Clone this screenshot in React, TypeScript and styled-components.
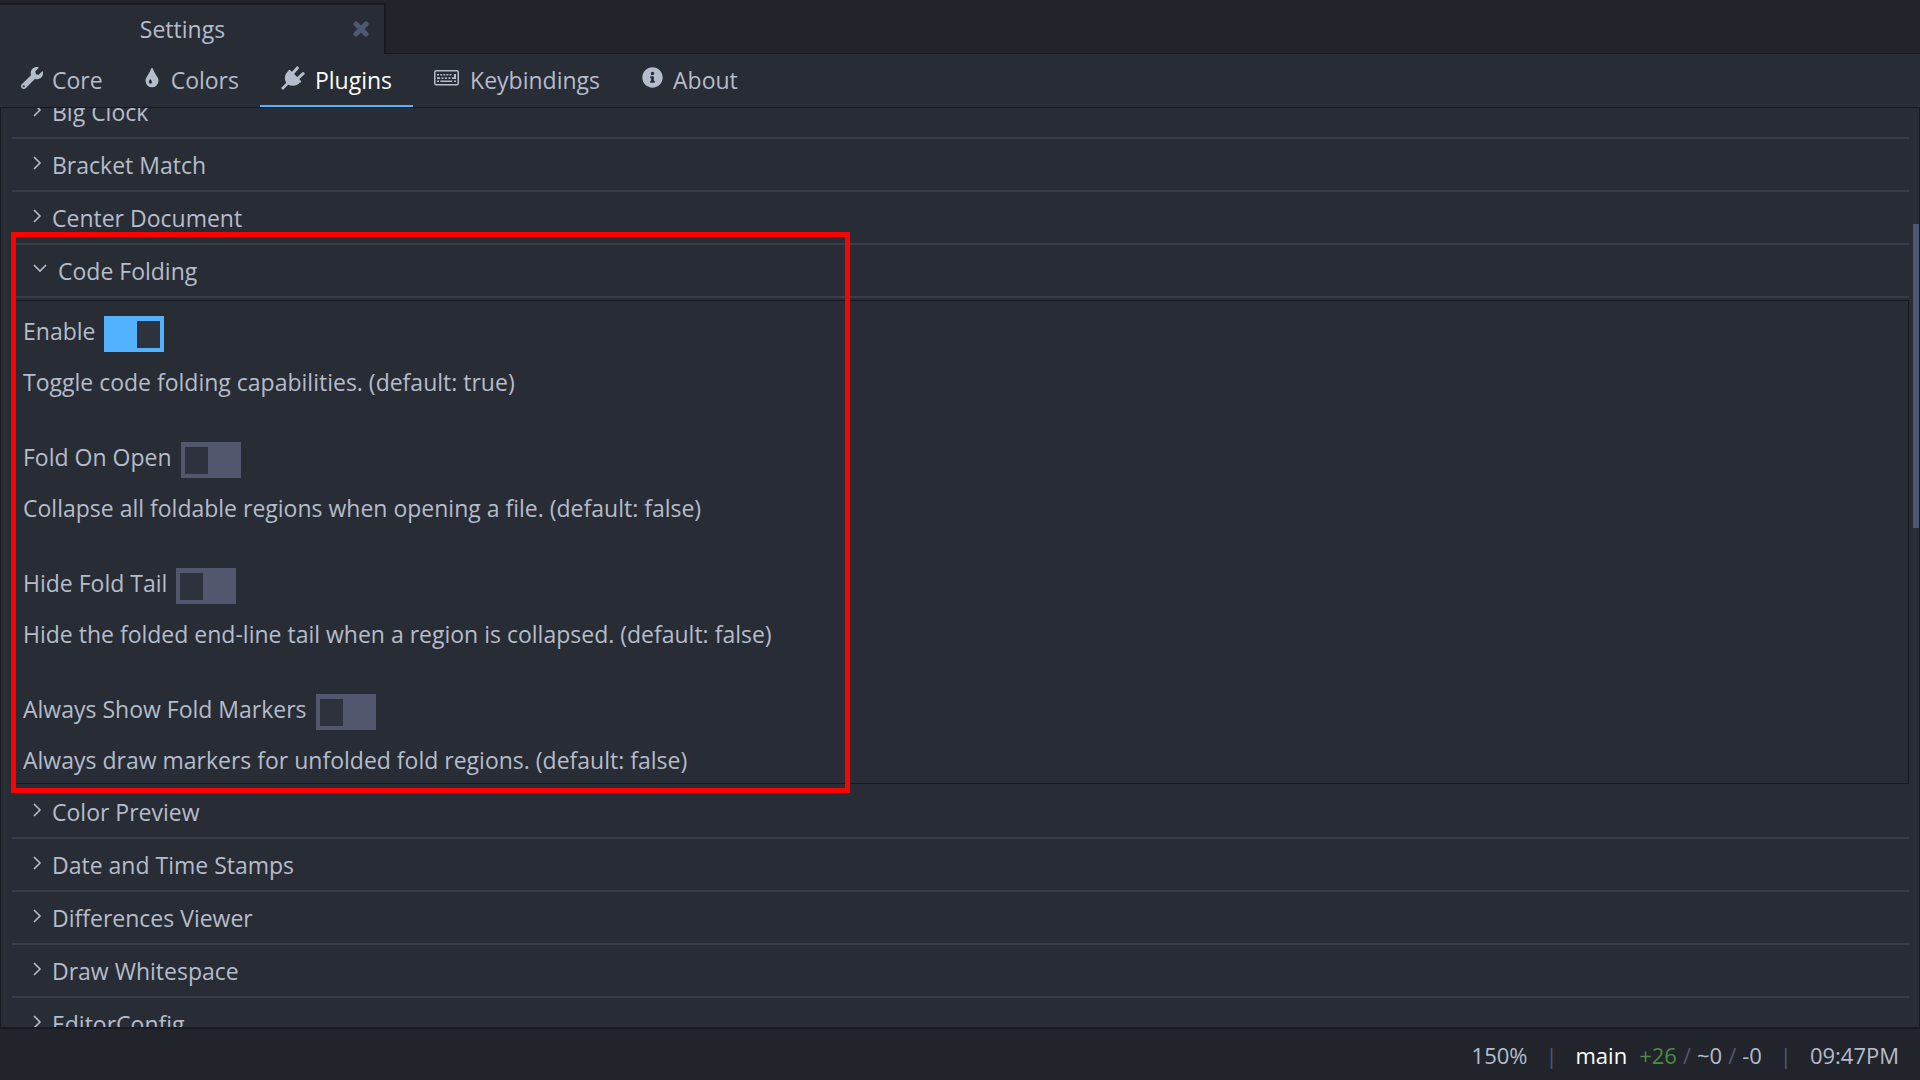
import React, { useLayoutEffect, useRef, useState } from "react";
import styled, { createGlobalStyle } from "styled-components";
import { FaInfoCircle, FaWrench } from "react-icons/fa";

const color = {
  base: "#282c34",
  shade: "#21252b",
  line: "#181a1f",
  divider: "#393d49",
  text: "#b5bccb",
  bright: "#ffffff",
  dim: "#4f5873",
  accent: "#52b2ff",
  off: "#53576e",
  knob: "#2d323c",
  added: "#4b8b43",
  mark: "#ff0000",
};

const GlobalStyle = createGlobalStyle`
  * { box-sizing: border-box; }
  html, body, #root { height: 100%; }
  body {
    margin: 0;
    background: ${color.base};
    color: ${color.text};
    font: 23px/30px "Open Sans", "Noto Sans", sans-serif;
  }
  button { font: inherit; color: inherit; background: none; border: 0; padding: 0; cursor: pointer; }
  svg { display: block; flex: none; }
`;

const Window = styled.div`
  height: 100vh;
  display: flex;
  flex-direction: column;
  overflow: hidden;
`;

const TabStrip = styled.header`
  display: flex;
  flex: none;
  height: 54px;
  padding-top: 3px;
  background: ${color.shade};
`;

const DocumentTab = styled.div`
  display: flex;
  align-items: center;
  width: 386px;
  padding: 0 15px 2px 0;
  background: ${color.base};
  border-top: 2px solid ${color.line};
  border-right: 2px solid ${color.line};
`;

const DocumentTitle = styled.span`
  flex: 1;
  padding-left: 12px;
  text-align: center;
`;

const CloseButton = styled.button`
  color: ${color.dim};
`;

const StripRest = styled.div`
  flex: 1;
  border-bottom: 1px solid ${color.line};
`;

const Sections = styled.nav`
  display: flex;
  flex: none;
  height: 54px;
  border-bottom: 1px solid ${color.line};
`;

const SectionTab = styled.button<{ $active: boolean }>`
  display: flex;
  align-items: center;
  padding: 0 21px;
  color: ${(p) => (p.$active ? color.bright : color.text)};
  border-bottom: 2px solid ${(p) => (p.$active ? color.accent : "transparent")};
`;

const IconSlot = styled.span<{ $width: number }>`
  width: ${(p) => p.$width}px;
  padding-bottom: 4px;
  color: ${color.text};
`;

const Body = styled.main`
  display: flex;
  flex: 1;
  min-height: 0;
  border: 1px solid ${color.line};
  border-width: 0 1px;
`;

const List = styled.div`
  flex: 1;
  min-width: 0;
  padding-left: 11px;
  overflow-y: auto;
  scrollbar-width: none;
`;

const Track = styled.div`
  display: flex;
  flex-direction: column;
  width: 10px;
  padding-left: 4px;
`;

const TrackPart = styled.div<{ $grow: number; $thumb?: boolean }>`
  flex: ${(p) => p.$grow} 0 0;
  background: ${(p) => (p.$thumb ? color.dim : "transparent")};
`;

const Plugin = styled.section`
  position: relative;
`;

const PluginHeader = styled.button<{ $open: boolean }>`
  display: flex;
  align-items: center;
  gap: ${(p) => (p.$open ? 11 : 10)}px;
  width: 100%;
  height: 53px;
  padding: 0 0 0 21px;
  text-align: left;
  border-bottom: 2px solid ${color.divider};
`;

const Chevron = styled.span`
  padding-bottom: 4px;
`;

const Panel = styled.div`
  display: flex;
  flex-direction: column;
  gap: 42px;
  margin: 2px 0;
  padding: 15px 10px 5px;
  border: 1px solid ${color.line};
`;

const Option = styled.div`
  display: flex;
  flex-direction: column;
  gap: 12px;
`;

const OptionLabel = styled.label`
  display: flex;
  gap: 9px;
  height: 36px;
`;

const Toggle = styled.input`
  appearance: none;
  display: flex;
  width: 60px;
  height: 36px;
  margin: 0;
  padding: 5px 4px;
  background: ${color.off};
  &::before {
    content: "";
    width: 23px;
    height: 27px;
    background: ${color.knob};
  }
  &:checked {
    justify-content: flex-end;
    background: ${color.accent};
  }
`;

const Description = styled.p`
  margin: 0;
  line-height: 36px;
`;

const Highlight = styled.div`
  position: absolute;
  top: -13px;
  bottom: -9px;
  left: -1px;
  width: 839px;
  border: 5px solid ${color.mark};
  pointer-events: none;
`;

const StatusBar = styled.footer`
  display: flex;
  flex: none;
  align-items: center;
  justify-content: flex-end;
  height: 53px;
  padding: 0 21px;
  font-size: 22px;
  background: ${color.shade};
  border-top: 2px solid ${color.line};
`;

const Changes = styled.span`
  display: flex;
  gap: 6px;
  padding-left: 12px;
`;

const StatusText = styled.span<{ $color?: string }>`
  color: ${(p) => p.$color ?? color.text};
`;

const Separator = styled.span`
  width: 48px;
  text-align: center;
  color: ${color.dim};
`;

const CloseIcon = () => (
  <svg width="16" height="16" viewBox="0 0 16 16" fill="none" stroke="currentColor" strokeWidth="5" strokeLinecap="round">
    <path d="m3 3 10 10M13 3 3 13" />
  </svg>
);

const DropIcon = () => (
  <svg width="14" height="20" viewBox="0 0 14 20">
    <path
      fill="currentColor"
      fillRule="evenodd"
      d="M7 0c.5 0 .8.3 1 .8 1 3.400 2.300 5 4 7.700.9 1.400 1.500 2.600 1.500 4.300A6.500 6.500 0 0 1 .5 12.800C.5 11.100 1.100 9.900 2 8.500 3.700 5.800 5 4.200 6 .8 6.200.3 6.500 0 7 0ZM5.300 11c-.6 1.200-1.500 1.900-1.500 3.100a1.600 1.600 0 0 0 3.200 0c0-1.200-1-1.900-1.700-3.100Z"
    />
  </svg>
);

const PlugIcon = () => (
  <svg width="24" height="24" viewBox="0 0 24 24" fill="none" stroke="currentColor">
    <path fill="currentColor" stroke="none" d="M8.500 4.500 19.500 15.500C17 20 11 21 6.800 18.500L5.500 17.200C2.500 13 3.500 7 8.500 4.500Z" />
    <path strokeWidth="3" strokeLinecap="round" d="m11.500 7.500 4.800-5.600M16.800 12.500l5.300-4.900" />
    <path strokeWidth="2.600" d="M8 16 1 23" />
    <path strokeWidth="2.400" strokeLinecap="round" d="m8.500 5 10.500 10.500" />
  </svg>
);

const KeyboardIcon = () => (
  <svg width="25" height="16" viewBox="0 0 25 16" fill="currentColor">
    <rect x=".75" y=".75" width="23.500" height="14" rx="1.500" fill="none" stroke="currentColor" strokeWidth="1.500" />
    <path d="M3 4h2v1.600H3zM6.300 4h1.900v1.600H6.300zM9.400 4h1.900v1.600H9.400zM12.500 4h1.900v1.600h-1.900zM15.600 4h1.900v1.600h-1.900zM20 4h2v5h-4V7.300h2zM3 7.300h3.200V9H3zM7.600 7.300h1.900V9H7.600zM11 7.300h1.900V9H11zM14.500 7.300h1.900V9h-1.900zM3 10.500h2v1.600H3zM6.300 10.500h12v1.600h-12zM20 10.500h2v1.600h-2z" />
  </svg>
);

const sections = [
  { name: "Core", width: 31, icon: <FaWrench size={22} /> },
  { name: "Colors", width: 26, icon: <DropIcon /> },
  { name: "Plugins", width: 34, icon: <PlugIcon /> },
  { name: "Keybindings", width: 36, icon: <KeyboardIcon /> },
  { name: "About", width: 31, icon: <FaInfoCircle size={21} /> },
];

const foldingOptions = [
  { name: "Enable", text: "Toggle code folding capabilities. (default: true)", on: true },
  { name: "Fold On Open", text: "Collapse all foldable regions when opening a file. (default: false)", on: false },
  { name: "Hide Fold Tail", text: "Hide the folded end-line tail when a region is collapsed. (default: false)", on: false },
  { name: "Always Show Fold Markers", text: "Always draw markers for unfolded fold regions. (default: false)", on: false },
];

const plugins = [
  "Big Clock",
  "Bracket Match",
  "Center Document",
  "Code Folding",
  "Color Preview",
  "Date and Time Stamps",
  "Differences Viewer",
  "Draw Whitespace",
  "EditorConfig",
];

function PluginRow({ name }: { name: string }) {
  const hasOptions = name === "Code Folding";
  const [open, setOpen] = useState(hasOptions);
  return (
    <Plugin>
      <PluginHeader $open={open} aria-expanded={open} onClick={() => setOpen(!open)}>
        <Chevron>
          <svg
            width={open ? 14 : 9}
            height={open ? 9 : 14}
            viewBox={open ? "0 0 14 9" : "0 0 9 14"}
            fill="none"
            stroke="currentColor"
            strokeWidth="1.600"
          >
            <path d={open ? "M1 1l6 6 6-6" : "M1 1l6 6-6 6"} />
          </svg>
        </Chevron>
        {name}
      </PluginHeader>
      {open && hasOptions && (
        <>
          <Panel>
            {foldingOptions.map((o) => (
              <Option key={o.name}>
                <OptionLabel>
                  {o.name}
                  <Toggle type="checkbox" defaultChecked={o.on} />
                </OptionLabel>
                <Description>{o.text}</Description>
              </Option>
            ))}
          </Panel>
          <Highlight />
        </>
      )}
    </Plugin>
  );
}

export default function App() {
  const list = useRef<HTMLDivElement>(null);
  const [active, setActive] = useState("Plugins");

  useLayoutEffect(() => {
    if (list.current) list.current.scrollTop = 22;
  }, []);

  return (
    <>
      <GlobalStyle />
      <Window>
        <TabStrip>
          <DocumentTab>
            <DocumentTitle>Settings</DocumentTitle>
            <CloseButton aria-label="Close">
              <CloseIcon />
            </CloseButton>
          </DocumentTab>
          <StripRest />
        </TabStrip>
        <Sections>
          {sections.map((s) => (
            <SectionTab key={s.name} $active={s.name === active} onClick={() => setActive(s.name)}>
              <IconSlot $width={s.width}>{s.icon}</IconSlot>
              {s.name}
            </SectionTab>
          ))}
        </Sections>
        <Body>
          <List ref={list}>
            {plugins.map((name) => (
              <PluginRow key={name} name={name} />
            ))}
          </List>
          <Track>
            <TrackPart $grow={116} />
            <TrackPart $grow={304} $thumb />
            <TrackPart $grow={499} />
          </Track>
        </Body>
        <StatusBar>
          <StatusText>150%</StatusText>
          <Separator>|</Separator>
          <StatusText $color={color.bright}>main</StatusText>
          <Changes>
            <StatusText $color={color.added}>+26</StatusText>
            <StatusText $color={color.dim}>/</StatusText>
            <StatusText>~0</StatusText>
            <StatusText $color={color.dim}>/</StatusText>
            <StatusText>-0</StatusText>
          </Changes>
          <Separator>|</Separator>
          <StatusText>09:47PM</StatusText>
        </StatusBar>
      </Window>
    </>
  );
}
